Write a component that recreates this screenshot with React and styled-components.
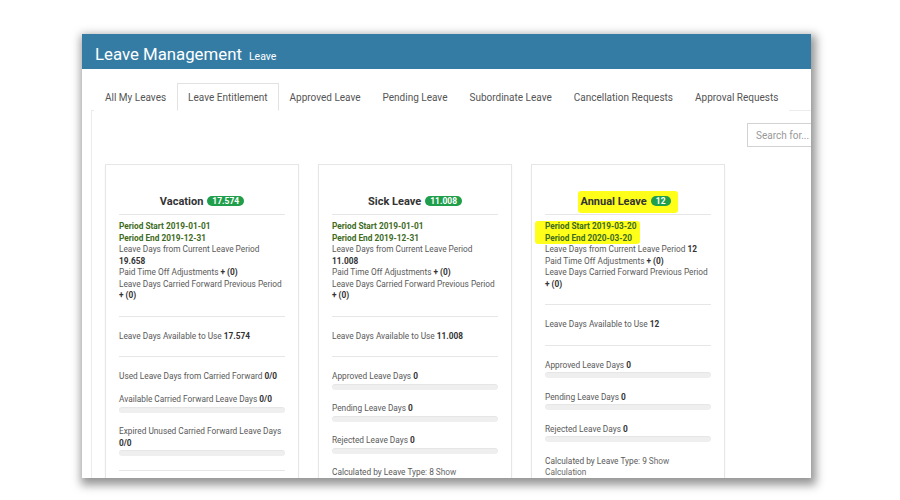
import React from 'react';
import styled, { createGlobalStyle } from 'styled-components';

const Global = createGlobalStyle`
  html, body { margin: 0; padding: 0; background: #fff; }
  body { font-family: Roboto, "Liberation Sans", Arial, sans-serif; }
  * { box-sizing: border-box; }
`;

const Stage = styled.div`
  width: 900px;
  height: 500px;
  padding: 34px 0 0 82px;
  overflow: hidden;
`;

const Window = styled.div`
  width: 729px;
  height: 444px;
  background: #fff;
  box-shadow: 2px 4px 9px 3px rgba(0, 0, 0, 0.42);
  overflow: hidden;
  display: flex;
  flex-direction: column;
`;

const Header = styled.header`
  height: 35px;
  flex-shrink: 0;
  background: #357ca5;
  color: #fff;
  display: flex;
  align-items: baseline;
  padding: 9px 0 0 13px;
`;

const Title = styled.h1`
  margin: 0;
  font-size: 16.8px;
  font-weight: 400;
  line-height: 22px;
`;

const Sub = styled.span`
  font-size: 10.5px;
  margin-left: 7px;
`;

const Body = styled.div`
  padding: 14px 0 0 9px;
  flex: 1;
`;

const Tabs = styled.ul`
  list-style: none;
  margin: 0;
  padding: 0 0 0 3px;
  width: 860px;
  display: flex;
  border-bottom: 1px solid #ececec;
`;

const Tab = styled.li`
  height: 28px;
  line-height: 27px;
  padding: 0 10px;
  font-size: 10px;
  color: #555;
  white-space: nowrap;
  border: 1px solid ${p => (p.$active ? '#e2e2e2' : 'transparent')};
  border-bottom: 1px solid ${p => (p.$active ? '#fff' : 'transparent')};
  margin-bottom: -1px;
  background: #fff;
`;

const Panel = styled.div`
  width: 860px;
  border-left: 1px solid #ececec;
  padding: 12px 0 0 13px;
`;

const Toolbar = styled.div`
  display: flex;
  justify-content: flex-end;
  padding-right: 54px;
`;

const Search = styled.input`
  width: 150px;
  height: 24px;
  border: 1px solid #d2d2d2;
  padding: 0 8px;
  font-family: Roboto, "Liberation Sans", Arial, sans-serif;
  font-size: 10px;
  color: #555;
  outline: none;
  &::placeholder { color: #999; }
`;

const Cards = styled.div`
  display: flex;
  align-items: flex-start;
  gap: 19px;
  margin-top: 17px;
`;

const Card = styled.section`
  width: 194px;
  min-height: 340px;
  border: 1px solid #e6e6e6;
  box-shadow: 0 1px 2px rgba(0, 0, 0, 0.04);
  padding: 0 13px;
  background: #fff;
`;

const CardTitle = styled.div`
  padding: 29px 0 4px;
  text-align: center;
  font-size: 11px;
  font-weight: 700;
  line-height: 16px;
  color: #333;
  border-bottom: 1px solid #e6e6e6;
`;

const TitleMark = styled.span`
  background: ${p => (p.$hl ? '#ffff1a' : 'transparent')};
  padding: ${p => (p.$hl ? '4px 7px 5px 2px' : '0')};
  border-radius: 3px;
`;

const Badge = styled.span`
  display: inline-block;
  margin-left: 4px;
  padding: 0 5px;
  height: 10px;
  line-height: 10px;
  border-radius: 5px;
  background: #1f9e4b;
  color: #fff;
  font-size: 8.5px;
  font-weight: 700;
  vertical-align: 1px;
`;

const Section = styled.div`
  padding: ${p => p.$pad || '14px 0'};
  border-bottom: ${p => (p.$noBorder ? 'none' : '1px solid #e6e6e6')};
`;

const Line = styled.div`
  font-size: 8.3px;
  line-height: 11.5px;
  color: #595959;
`;

const Period = styled(Line)`
  color: #3d6b21;
  font-weight: 700;
`;

const PeriodMark = styled.div`
  width: fit-content;
  margin-left: -10px;
  padding: 0 3px 0 10px;
  background: ${p => (p.$hl ? '#ffff1a' : 'transparent')};
  border-radius: 3px;
`;

const Val = styled.b`
  color: #333;
  font-weight: 700;
`;

const Link = styled.span`
  color: #6a6a6a;
`;

const Item = styled.div`
  margin-bottom: ${p => (p.$bar ? '13.5px' : '11.5px')};
`;

const Bar = styled.div`
  height: 6px;
  margin-top: 1px;
  border-radius: 3px;
  background: #efefef;
  box-shadow: inset 0 1px 1px rgba(0, 0, 0, 0.04);
`;

const StatItem = ({ label, value, bar }) => (
  <Item $bar={bar}>
    <Line>
      {label} <Val>{value}</Val>
    </Line>
    {bar && <Bar />}
  </Item>
);

const tabs = [
  'All My Leaves',
  'Leave Entitlement',
  'Approved Leave',
  'Pending Leave',
  'Subordinate Leave',
  'Cancellation Requests',
  'Approval Requests',
];

const cards = [
  {
    name: 'Vacation',
    badge: '17.574',
    start: '2019-01-01',
    end: '2019-12-31',
    current: '19.658',
    available: '17.574',
    stats: [
      { label: 'Used Leave Days from Carried Forward', value: '0/0', bar: false },
      { label: 'Available Carried Forward Leave Days', value: '0/0', bar: true },
      { label: 'Expired Unused Carried Forward Leave Days', value: '0/0', bar: true },
    ],
    closing: true,
  },
  {
    name: 'Sick Leave',
    badge: '11.008',
    start: '2019-01-01',
    end: '2019-12-31',
    current: '11.008',
    available: '11.008',
    stats: [
      { label: 'Approved Leave Days', value: '0', bar: true },
      { label: 'Pending Leave Days', value: '0', bar: true },
      { label: 'Rejected Leave Days', value: '0', bar: true },
    ],
    calc: '8',
  },
  {
    name: 'Annual Leave',
    badge: '12',
    start: '2019-03-20',
    end: '2020-03-20',
    current: '12',
    available: '12',
    highlight: true,
    stats: [
      { label: 'Approved Leave Days', value: '0', bar: true },
      { label: 'Pending Leave Days', value: '0', bar: true },
      { label: 'Rejected Leave Days', value: '0', bar: true },
    ],
    calc: '9',
  },
];

const LeaveCard = ({ c }) => (
  <Card>
    <CardTitle>
      <TitleMark $hl={c.highlight}>
        {c.name}
        <Badge>{c.badge}</Badge>
      </TitleMark>
    </CardTitle>
    <Section $pad="6px 0 14px">
      <PeriodMark $hl={c.highlight}>
        <Period>Period Start {c.start}</Period>
        <Period>Period End {c.end}</Period>
      </PeriodMark>
      <Line>
        Leave Days from Current Leave Period <Val>{c.current}</Val>
      </Line>
      <Line>
        Paid Time Off Adjustments <Val>+ (0)</Val>
      </Line>
      <Line>
        Leave Days Carried Forward Previous Period <Val>+ (0)</Val>
      </Line>
    </Section>
    <Section>
      <Line>
        Leave Days Available to Use <Val>{c.available}</Val>
      </Line>
    </Section>
    <Section $pad="14px 0 0" $noBorder={!c.closing}>
      {c.stats.map(s => (
        <StatItem key={s.label} {...s} />
      ))}
      {c.calc && (
        <Line>
          Calculated by Leave Type: {c.calc} <Link>Show Calculation</Link>
        </Line>
      )}
    </Section>
  </Card>
);

export default function App() {
  return (
    <>
      <Global />
      <Stage>
        <Window>
          <Header>
            <Title>Leave Management</Title>
            <Sub>Leave</Sub>
          </Header>
          <Body>
            <Tabs>
              {tabs.map(t => (
                <Tab key={t} $active={t === 'Leave Entitlement'}>
                  {t}
                </Tab>
              ))}
            </Tabs>
            <Panel>
              <Toolbar>
                <Search placeholder="Search for..." />
              </Toolbar>
              <Cards>
                {cards.map(c => (
                  <LeaveCard key={c.name} c={c} />
                ))}
              </Cards>
            </Panel>
          </Body>
        </Window>
      </Stage>
    </>
  );
}
